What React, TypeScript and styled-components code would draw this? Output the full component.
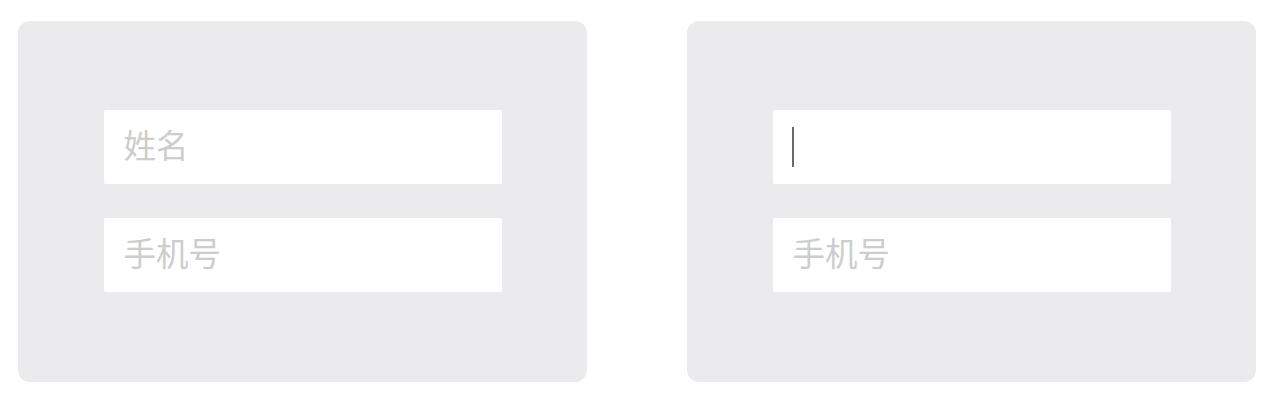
import React from 'react';
import styled, { createGlobalStyle } from 'styled-components';

const GlobalStyle = createGlobalStyle`
	html, body {
		margin: 0;
		padding: 0;
		background: #ffffff;
		font-family: 'Noto Sans CJK SC', 'Noto Sans', sans-serif;
	}
`;

const Page = styled.div`
	display: flex;
	gap: 100px;
	padding: 21px 20px 21px 18px;
`;

const Card = styled.div`
	width: 569px;
	height: 361px;
	box-sizing: border-box;
	background: #ebebed;
	border-radius: 12px;
	display: flex;
	flex-direction: column;
	align-items: center;
	justify-content: center;
	gap: 34px;
	padding-bottom: 2px;
`;

const Field = styled.div`
	width: 398px;
	height: 74px;
	box-sizing: border-box;
	background: #ffffff;
	border-radius: 2px;
	display: flex;
	align-items: center;
	padding: 0 0 4px 20px;
`;

const Placeholder = styled.span`
	font-size: 32.5px;
	line-height: 1;
	color: #cdcdcd;
	font-weight: 400;
`;

const Caret = styled.span`
	display: block;
	width: 2px;
	height: 40px;
	margin: 0 0 -4px -1px;
	background: #6a6a6a;
`;

type FieldProps = { placeholder: string; focused?: boolean };

const InputField = ({ placeholder, focused }: FieldProps) => (
	<Field>{focused ? <Caret /> : <Placeholder>{placeholder}</Placeholder>}</Field>
);

export default function App() {
	return (
		<>
			<GlobalStyle />
			<Page>
				<Card>
					<InputField placeholder='姓名' />
					<InputField placeholder='手机号' />
				</Card>
				<Card>
					<InputField placeholder='姓名' focused />
					<InputField placeholder='手机号' />
				</Card>
			</Page>
		</>
	);
}
